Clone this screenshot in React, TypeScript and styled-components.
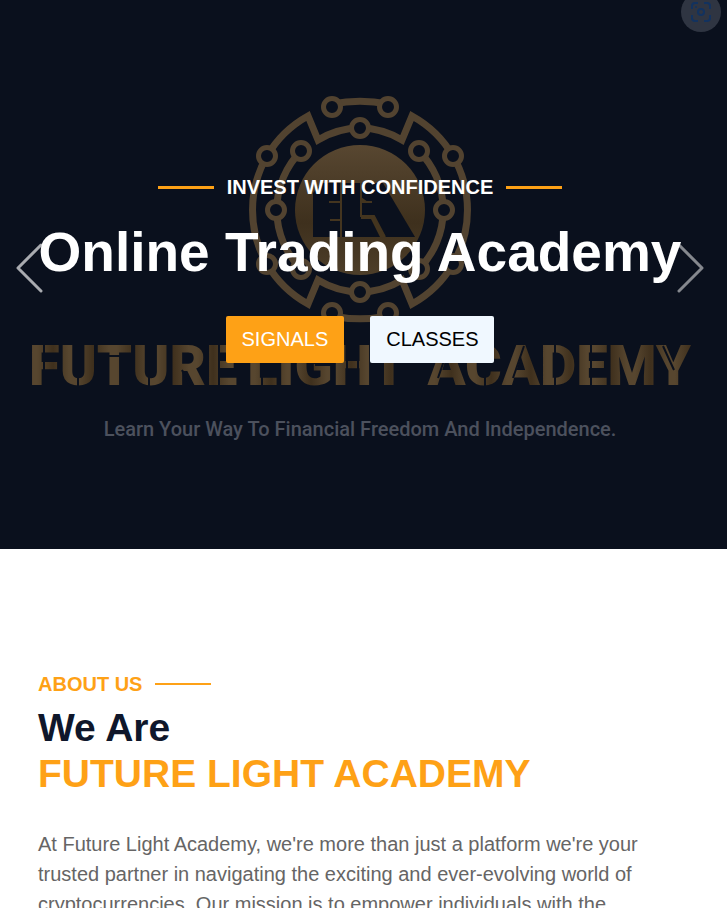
import React from 'react';
import styled, { createGlobalStyle } from 'styled-components';

const GlobalStyle = createGlobalStyle`
  * { box-sizing: border-box; }
  body {
    margin: 0;
    background: #fff;
    font-family: "Liberation Sans", Arial, sans-serif;
    font-size: 20px;
    color: #666565;
  }
  h1, h2, p { margin: 0; }
`;

const Hero = styled.section`
  display: grid;
  position: relative;
  min-height: 549px;
  padding-right: 7px;
  overflow: hidden;
  background: #0a101d;
  > * { grid-area: 1 / 1; }
`;

const Artwork = styled.div`
  display: flex;
  flex-direction: column;
  align-items: center;
  padding: 94px 29px 0;
`;

const Emblem = styled.svg`
  display: block;
  width: 232px;
  height: 232px;
`;

const Wordmark = styled.div`
  align-self: stretch;
  display: flex;
  gap: 10px;
  margin-top: 12px;
  font: 900 56px/56px Roboto, sans-serif;
  > :last-child { margin-left: auto; }
`;

const Word = styled.span`
  position: relative;
  color: transparent;
  background: repeating-linear-gradient(90deg, #57462f 0 8px, #3f301d 24px, #57462f 40px);
  background-clip: text;
  -webkit-background-clip: text;
`;

const Cuts = styled.svg`
  position: absolute;
  inset: 0;
  width: 100%;
  height: 100%;
  fill: none;
  stroke: #0a101d;
  stroke-width: 2px;
`;

const Tagline = styled.p`
  margin-top: 23px;
  font: 500 20px/24px Roboto, sans-serif;
  color: #4c515d;
  white-space: nowrap;
`;

const Caption = styled.div`
  display: flex;
  flex-direction: column;
  align-items: center;
  padding-top: 175px;
  z-index: 1;
`;

const Eyebrow = styled.div<{ $tone: string }>`
  display: flex;
  align-items: center;
  gap: 13px;
  font-weight: 700;
  line-height: 24px;
  color: ${p => p.$tone};
`;

const Rule = styled.span<{ $thickness: number }>`
  width: 56px;
  height: ${p => p.$thickness}px;
  background: #fea116;
`;

const Title = styled.h1`
  margin-top: 18px;
  font-size: 55px;
  line-height: 70px;
  color: #fff;
  white-space: nowrap;
`;

const Actions = styled.div`
  display: flex;
  gap: 26px;
  margin-top: 29px;
`;

const ActionLink = styled.a<{ $primary?: boolean }>`
  padding: 12px 16px;
  border-radius: 2px;
  line-height: 23px;
  text-decoration: none;
  color: ${p => (p.$primary ? '#fff' : '#000')};
  background: ${p => (p.$primary ? '#fea116' : '#f0f8ff')};
`;

const Arrows = styled.div`
  display: flex;
  justify-content: space-between;
  align-items: center;
  padding: 0 15px 13px;
`;

const ArrowButton = styled.button<{ $opacity: number }>`
  padding: 0;
  border: 0;
  background: none;
  opacity: ${p => p.$opacity};
  svg {
    display: block;
    fill: none;
    stroke: #fff;
    stroke-width: 3px;
    stroke-linecap: round;
    stroke-linejoin: round;
  }
`;

const LensButton = styled.button`
  position: absolute;
  top: -8px;
  right: 6px;
  display: grid;
  place-items: center;
  width: 40px;
  height: 40px;
  padding: 0;
  border: 0;
  border-radius: 50%;
  background: #2f3542;
  z-index: 2;
`;

const About = styled.section`
  padding: 123px 38px 0;
`;

const Heading = styled.h2`
  margin-top: 9px;
  font-size: 39px;
  line-height: 46px;
  color: #0f172b;
  span { display: block; color: #fea116; }
`;

const Copy = styled.p`
  max-width: 640px;
  margin-top: 32px;
  line-height: 30px;
`;

const nodes: [number, number][] = [
  [-28, -103], [28, -103], [0, -82], [-59, -59], [59, -59], [-93, -54], [93, -54],
  [-84, 0], [84, 0],
  [-28, 103], [28, 103], [0, 82], [-59, 59], [59, 59], [-93, 54], [93, 54],
];

function LogoEmblem() {
  const quarter = 'M-93-54A108 108 0 0 1-52-94L-42-70A82 82 0 0 1 0-82';
  return (
    <Emblem viewBox="-116 -116 232 232" aria-hidden="true">
      <defs>
        <linearGradient id="disc" x1="0" y1="0" x2="0" y2="1">
          <stop offset="0" stopColor="#584731" />
          <stop offset=".6" stopColor="#3e301d" />
          <stop offset="1" stopColor="#4d3e29" />
        </linearGradient>
      </defs>
      <g fill="none" stroke="#524330" strokeWidth="7">
        <path d={quarter} />
        <path d={quarter} transform="scale(-1 1)" />
        <path d={quarter} transform="scale(1 -1)" />
        <path d={quarter} transform="scale(-1 -1)" />
        <path d="M-93-54A108 108 0 0 0-93 54M93-54A108 108 0 0 1 93 54" />
        <path d="M-59-59A84 84 0 0 0-59 59M59-59A84 84 0 0 1 59 59" />
        <path d="M-28-106A140 140 0 0 1 28-106M-28 106A140 140 0 0 0 28 106" />
      </g>
      <g fill="#0a101d" stroke="#524330" strokeWidth="5">
        {nodes.map(([x, y]) => <circle key={`${x},${y}`} cx={x} cy={y} r="8.5" />)}
      </g>
      <circle r="65" fill="url(#disc)" />
      <path d="M-47 27V-17L-38-27H23L55 27Z" fill="#0a101d" />
      <path d="M-31-8H-20M-30 10H-20M-19-27V27M1-27V6H14L25 27M1-8H12" fill="none" stroke="#44351f" strokeWidth="2" />
      <path d="M1-8V-13L8-8ZM1 6H14L25 27H20L11 9H1Z" fill="#44351f" />
    </Emblem>
  );
}

export default function App() {
  return (
    <>
      <GlobalStyle />
      <Hero>
        <Artwork>
          <LogoEmblem />
          <Wordmark>
            <Word>
              FUTURE
              <Cuts aria-hidden="true">
                <path d="M15 6V48M49 32V49M67 18H101M120 32V49M153 32L161 48M190 6V48" />
              </Cuts>
            </Word>
            <Word>
              LIGHT
              <Cuts aria-hidden="true">
                <path d="M15 30V48M68 27H86M100 6V48M111 6V48M126 18H159" />
              </Cuts>
            </Word>
            <Word>
              ACADEMY
              <Cuts aria-hidden="true">
                <path d="M22 8L11 40M58 5V17M58 37V49M97 8L86 40M128 6V48M164 6V48M236 8L247 32" />
              </Cuts>
            </Word>
          </Wordmark>
          <Tagline>Learn Your Way To Financial Freedom And Independence.</Tagline>
        </Artwork>
        <Arrows>
          <ArrowButton $opacity={0.65} aria-label="Previous">
            <svg width="28" height="50" viewBox="0 0 28 50"><path d="M26 2L3 25L26 48" /></svg>
          </ArrowButton>
          <ArrowButton $opacity={0.5} aria-label="Next">
            <svg width="28" height="50" viewBox="0 0 28 50"><path d="M2 2L25 25L2 48" /></svg>
          </ArrowButton>
        </Arrows>
        <Caption>
          <Eyebrow $tone="#fff">
            <Rule $thickness={3} />
            INVEST WITH CONFIDENCE
            <Rule $thickness={3} />
          </Eyebrow>
          <Title>Online Trading Academy</Title>
          <Actions>
            <ActionLink href="#signals" $primary>SIGNALS</ActionLink>
            <ActionLink href="#classes">CLASSES</ActionLink>
          </Actions>
        </Caption>
        <LensButton aria-label="Visual search">
          <svg width="20" height="20" viewBox="0 0 20 20" fill="none" stroke="#12325f" strokeWidth="2">
            <path d="M1 7V4Q1 1 4 1H7M13 1H16Q19 1 19 4V7M19 13V16Q19 19 16 19H13M7 19H4Q1 19 1 16V13" />
            <circle cx="10" cy="10" r="3" />
            <circle cx="5" cy="5" r="1" fill="#12325f" stroke="none" />
          </svg>
        </LensButton>
      </Hero>
      <About>
        <Eyebrow $tone="#fea116">
          ABOUT US
          <Rule $thickness={2} />
        </Eyebrow>
        <Heading>We Are <span>FUTURE LIGHT ACADEMY</span></Heading>
        <Copy>
          At Future Light Academy, we're more than just a platform we're your trusted partner in
          navigating the exciting and ever-evolving world of cryptocurrencies. Our mission is to
          empower individuals with the
        </Copy>
      </About>
    </>
  );
}
